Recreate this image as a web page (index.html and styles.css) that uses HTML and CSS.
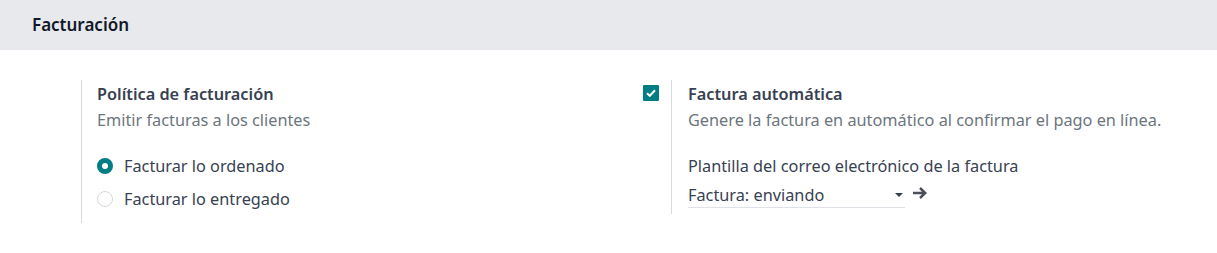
FILE: index.html
```html
<!DOCTYPE html>
<html lang="es">
<head>
  <meta charset="UTF-8">
  <title>Facturación</title>
  <link rel="stylesheet" href="styles.css">
</head>
<body>
  <h2 class="section-title">Facturación</h2>

  <div class="settings">
    <div class="setting-box">
      <div class="left-pane"></div>
      <div class="right-pane">
        <div class="setting-label">Política de facturación</div>
        <div class="setting-help">Emitir facturas a los clientes</div>
        <div class="radio-list">
          <label class="radio-item">
            <span class="radio checked"></span>
            Facturar lo ordenado
          </label>
          <label class="radio-item">
            <span class="radio"></span>
            Facturar lo entregado
          </label>
        </div>
      </div>
    </div>

    <div class="setting-box">
      <div class="left-pane">
        <span class="checkbox">
          <svg width="10" height="8" viewBox="0 0 10 8"><path d="M1 4.2 L3.8 6.8 L9 1.2" fill="none" stroke="#fff" stroke-width="2"/></svg>
        </span>
      </div>
      <div class="right-pane short">
        <div class="setting-label">Factura automática</div>
        <div class="setting-help">Genere la factura en automático al confirmar el pago en línea.</div>
        <div class="field-block">
          <div class="field-label">Plantilla del correo electrónico de la factura</div>
          <div class="field-row">
            <div class="select">
              <span>Factura: enviando</span>
              <span class="caret"></span>
            </div>
            <svg class="arrow" width="16" height="14" viewBox="0 0 16 14"><path d="M1 7 H13 M8 2 L13.2 7 L8 12" fill="none" stroke="#4a4f59" stroke-width="2.5" stroke-linejoin="miter"/></svg>
          </div>
        </div>
      </div>
    </div>
  </div>
</body>
</html>
```

FILE: styles.css
```css
body {
  margin: 0;
  font-family: "Noto Sans", "Open Sans", Arial, sans-serif;
  font-size: 16.3px;
  color: #374151;
  background: #fff;
}
.section-title {
  margin: 0;
  height: 50px;
  line-height: 50px;
  padding-left: 32px;
  background: #e7e9ed;
  font-size: 17px;
  font-weight: 600;
  color: #111827;
}
.settings {
  display: grid;
  grid-template-columns: 590px 590px;
  padding: 30px 0 0 33px;
}
.setting-box {
  display: flex;
  align-items: flex-start;
}
.left-pane {
  width: 48px;
  flex: none;
  padding-top: 5px;
}
.checkbox {
  display: flex;
  align-items: center;
  justify-content: center;
  width: 16px;
  height: 16px;
  margin-left: 20px;
  background: #017e84;
  border-radius: 1px;
}
.right-pane {
  border-left: 1px solid #d8dadd;
  padding: 2px 0 8px 15px;
  flex: 1;
}
.right-pane.short {
  padding-left: 16px;
  padding-bottom: 6px;
}
.setting-label {
  font-weight: 600;
  line-height: 24px;
  color: #374151;
}
.setting-help {
  color: #6c757d;
  line-height: 24px;
  margin-top: 2px;
}
.radio-list {
  margin-top: 17px;
}
.radio-item {
  display: flex;
  align-items: center;
  gap: 11px;
  height: 33px;
}
.radio {
  width: 16px;
  height: 16px;
  box-sizing: border-box;
  border-radius: 50%;
  border: 1px solid #d5d8dc;
  background: #fff;
}
.radio.checked {
  border: 5px solid #017e84;
}
.field-block {
  margin-top: 22px;
}
.field-label {
  line-height: 24px;
}
.field-row {
  display: flex;
  align-items: center;
  gap: 7px;
  margin-top: 4px;
}
.select {
  display: flex;
  align-items: center;
  justify-content: space-between;
  width: 217px;
  height: 26px;
  border-bottom: 1px solid #dee2e6;
  box-sizing: border-box;
}
.caret {
  width: 0;
  height: 0;
  border-left: 4px solid transparent;
  border-right: 4px solid transparent;
  border-top: 4px solid #374151;
  margin-right: 2px;
}
.arrow {
  margin-top: -4px;
}
```
